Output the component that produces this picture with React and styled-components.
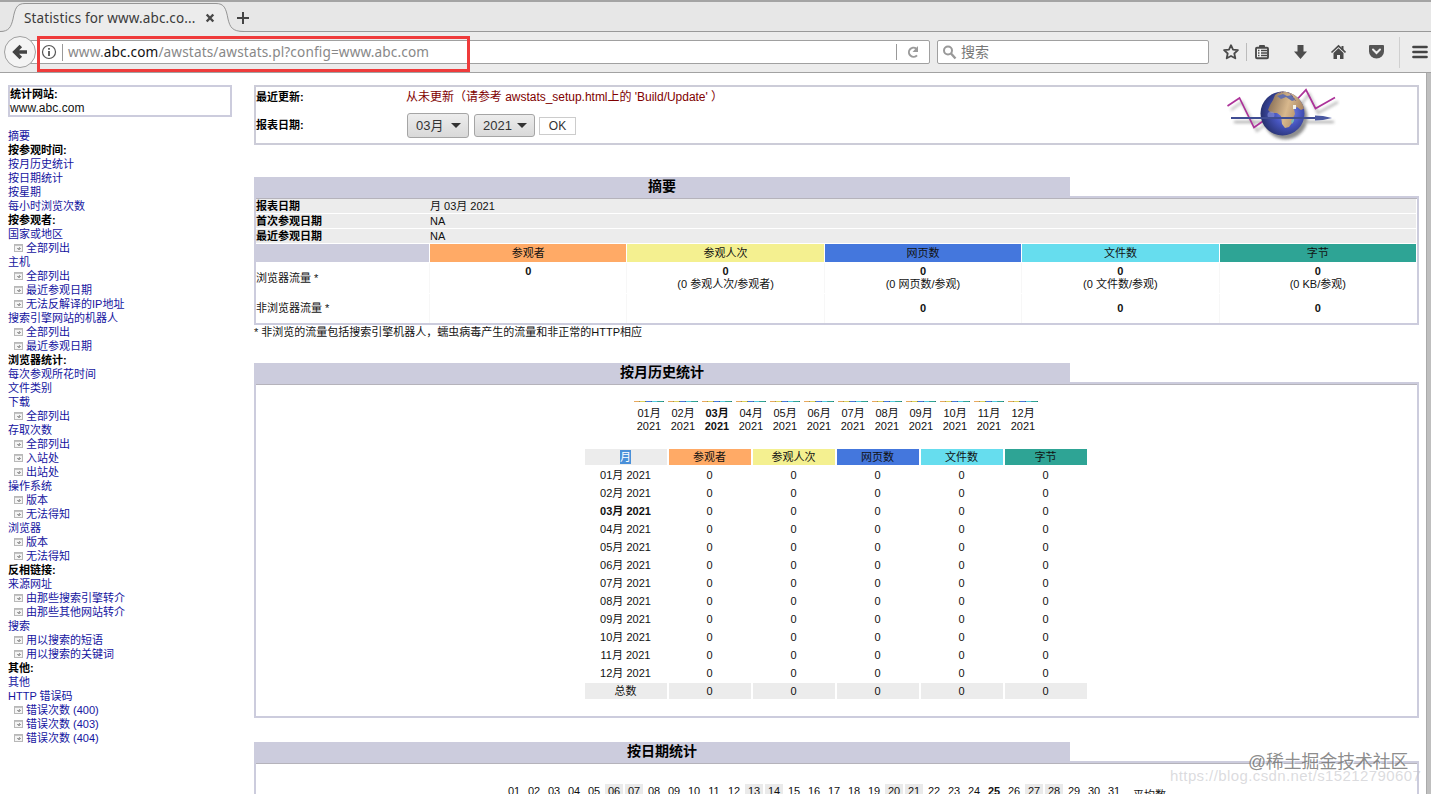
import React from 'react';
import styled, { createGlobalStyle } from 'styled-components';

const metrics = [
    { name: '参观者', color: '#ffaa66', avg: '' },
    { name: '参观人次', color: '#f4f090', avg: '(0 参观人次/参观者)' },
    { name: '网页数', color: '#4477dd', avg: '(0 网页数/参观)' },
    { name: '文件数', color: '#66ddee', avg: '(0 文件数/参观)' },
    { name: '字节', color: '#2ea495', avg: '(0 KB/参观)' },
];
const months = ['01', '02', '03', '04', '05', '06', '07', '08', '09', '10', '11', '12'];
const days = Array.from({ length: 31 }, (_, i) => String(i + 1).padStart(2, '0'));
const weekend = ['06', '07', '13', '14', '20', '21', '27', '28'];

// t: title, l: link, s: sub link
const menu = [
    ['l', '摘要'],
    ['t', '按参观时间:'],
    ['l', '按月历史统计'],
    ['l', '按日期统计'],
    ['l', '按星期'],
    ['l', '每小时浏览次数'],
    ['t', '按参观者:'],
    ['l', '国家或地区'],
    ['s', '全部列出'],
    ['l', '主机'],
    ['s', '全部列出'],
    ['s', '最近参观日期'],
    ['s', '无法反解译的IP地址'],
    ['l', '搜索引擎网站的机器人'],
    ['s', '全部列出'],
    ['s', '最近参观日期'],
    ['t', '浏览器统计:'],
    ['l', '每次参观所花时间'],
    ['l', '文件类别'],
    ['l', '下载'],
    ['s', '全部列出'],
    ['l', '存取次数'],
    ['s', '全部列出'],
    ['s', '入站处'],
    ['s', '出站处'],
    ['l', '操作系统'],
    ['s', '版本'],
    ['s', '无法得知'],
    ['l', '浏览器'],
    ['s', '版本'],
    ['s', '无法得知'],
    ['t', '反相链接:'],
    ['l', '来源网址'],
    ['s', '由那些搜索引擎转介'],
    ['s', '由那些其他网站转介'],
    ['l', '搜索'],
    ['s', '用以搜索的短语'],
    ['s', '用以搜索的关键词'],
    ['t', '其他:'],
    ['l', '其他'],
    ['l', 'HTTP 错误码'],
    ['s', '错误次数 (400)'],
    ['s', '错误次数 (403)'],
    ['s', '错误次数 (404)'],
];

const PageIcon = () => (
    <svg width="9" height="8" viewBox="0 0 9 8" shapeRendering="crispEdges">
        <rect x="0.5" y="0.5" width="8" height="7" fill="#f4f4f4" stroke="#b8b8b8" />
        <path d="M1 1.5h7" stroke="#c4c4c4" />
        <path d="M3 4.5h4M4 5.5h2M5 3.5h1" stroke="#a0a0a0" />
    </svg>
);

const Logo = () => (
    <svg width="114" height="54" viewBox="0 0 114 54">
        <defs>
            <radialGradient id="sea" cx="0.62" cy="0.48" r="0.62">
                <stop offset="0" stopColor="#7d8df0" />
                <stop offset="0.5" stopColor="#4654bd" />
                <stop offset="1" stopColor="#26306d" />
            </radialGradient>
            <linearGradient id="land" x1="0" y1="0" x2="1" y2="0.3">
                <stop offset="0" stopColor="#77604b" />
                <stop offset="0.6" stopColor="#d8b88d" />
                <stop offset="1" stopColor="#aa8764" />
            </linearGradient>
            <filter id="soft" x="-20%" y="-20%" width="150%" height="150%">
                <feGaussianBlur stdDeviation="1.8" />
            </filter>
            <clipPath id="ball"><circle cx="56.500" cy="25.500" r="22" /></clipPath>
        </defs>
        <g filter="url(#soft)" opacity="0.55" transform="translate(3 4)">
            <path d="M2 18L13 10L28 39L37 32M72 13L80 2L89 21L109 10" fill="none" stroke="#777" strokeWidth="2" />
            <circle cx="56.500" cy="25.500" r="22" fill="#333" />
            <path d="M5 30h100" stroke="#555" strokeWidth="2" />
        </g>
        <path d="M1.500 18L13.500 10L28 39.500L40 31M70 12.500L80 1.800L89.500 20.500L109 9.500" fill="none" stroke="#ac3299" strokeWidth="1.700" />
        <circle cx="56.500" cy="25.500" r="22" fill="url(#sea)" />
        <g clipPath="url(#ball)">
            <path d="M44 17l3-5 2-5 6-4 9-1 8 4 6 7 1 7-4 2-4-3-3 2 1 5-2 4 -1 5-3 4-4 1-3-4-1-8-4-3-6 0-3-3z" fill="url(#land)" />
            <path d="M51 8l6-2 4 2 5-1 3 5-3 1-6-4-5 2z" fill="#6470ac" />
            <path d="M53 5l7-2 3 2M62 3l8 10" fill="none" stroke="#695986" strokeDasharray="2 1" />
            <path d="M67 17h3v4h-3z" fill="#f2f3ee" />
            <path d="M65 33l3-3v3l-2 3z" fill="#77b8b4" />
            <circle cx="45" cy="27" r="3.500" fill="#8993db" opacity="0.6" />
        </g>
        <path d="M5 30h87" stroke="#3f4d93" strokeWidth="2" />
        <path d="M89 27.500l8 .5 9 2-9 2-8 .5z" fill="#4957a0" />
    </svg>
);

const Section = ({ title, children, height }) => (
    <div>
        <SectionTitle>{title}</SectionTitle>
        <SectionBox $height={height}>{children}</SectionBox>
    </div>
);

export default function App() {
    return (
        <Window>
            <GlobalStyle />
            <TabBar>
                <TabShape width="244" height="31" viewBox="0 0 244 31">
                    <path d="M0 30.500C9 30.500 11 26 13 18C15 7 17 2.500 25 2.500H216C224 2.500 226 7 228 18C230 26 232 30.500 244 30.500V31H0Z" fill="#ececec" />
                    <path d="M0 30.500C9 30.500 11 26 13 18C15 7 17 2.500 25 2.500H216C224 2.500 226 7 228 18C230 26 232 30.500 244 30.500" fill="none" stroke="#959595" />
                </TabShape>
                <TabTitle>Statistics for www.abc.co...</TabTitle>
                <TabIcon width="10" height="10" viewBox="0 0 10 10">
                    <path d="M1.700 1.500l6.600 7M8.300 1.500l-6.600 7" stroke="#484848" strokeWidth="2.400" />
                </TabIcon>
                <PlusIcon width="14" height="14" viewBox="0 0 14 14">
                    <path d="M7 1v12M1 7h12" stroke="#444" strokeWidth="2" />
                </PlusIcon>
            </TabBar>
            <Toolbar>
                <BackButton>
                    <svg width="16" height="16" viewBox="0 0 16 16">
                        <path d="M8.800 2L2.800 8l6 6M3.500 8H15" fill="none" stroke="#444" strokeWidth="3.600" />
                    </svg>
                </BackButton>
                <UrlBox>
                    <svg width="16" height="16" viewBox="0 0 16 16">
                        <circle cx="8" cy="8" r="6.500" fill="none" stroke="#555" strokeWidth="1.200" />
                        <path d="M8 7v5M8 4v1.800" stroke="#555" strokeWidth="1.800" />
                    </svg>
                    <Divider $h={17} $c="#999" />
                    <Url>www.<b>abc.com</b>/awstats/awstats.pl?config=www.abc.com</Url>
                    <Divider $h={16} $c="#999" />
                    <Reload width="14" height="14" viewBox="0 0 14 14">
                        <path d="M11 10.300A4.600 4.600 0 1 1 10.200 3.500" fill="none" stroke="#9b9b9b" strokeWidth="2" />
                        <path d="M12 1v6H6.500z" fill="#9b9b9b" />
                    </Reload>
                </UrlBox>
                <SearchBox>
                    <svg width="15" height="15" viewBox="0 0 15 15">
                        <circle cx="6" cy="5.500" r="4" fill="none" stroke="#999" strokeWidth="2" />
                        <path d="M9 8.500l4.500 5" stroke="#999" strokeWidth="2.400" />
                    </svg>
                    搜索
                </SearchBox>
                <Tools>
                    <svg width="16" height="16" viewBox="0 0 16 16">
                        <path d="M8 1.200l2 4.400 4.900.600-3.600 3.300 1 4.800L8 12l-4.300 2.300 1-4.800L1.100 6.200 6 5.600z" fill="none" stroke="#4a4a4a" strokeWidth="1.800" strokeLinejoin="round" />
                    </svg>
                    <Divider $h={18} $c="#bbb" />
                    <svg width="16" height="16" viewBox="0 0 16 16">
                        <rect x="2" y="3.700" width="12" height="10.500" rx="1" fill="#f6f6f6" stroke="#4a4a4a" strokeWidth="1.900" />
                        <path d="M5 3.500V2a1 1 0 0 1 1-1h4a1 1 0 0 1 1 1v1.500z" fill="#4a4a4a" />
                        <path d="M4 6.500h1.500M7 6.500h6M4 9h1.500M7 9h6M4 11.500h1.500M7 11.500h6" stroke="#4a4a4a" strokeWidth="1.300" />
                    </svg>
                    <svg width="16" height="16" viewBox="0 0 16 16">
                        <path d="M5.500 1h6v6.500H15L8.500 15 2 7.500h3.500z" fill="#4d4d4d" />
                    </svg>
                    <svg width="16" height="16" viewBox="0 0 16 16">
                        <path d="M1.500 8.500l7-6.500 7 6.500" fill="none" stroke="#4a4a4a" strokeWidth="1.700" />
                        <path d="M11.500 2h2v4h-2z" fill="#4a4a4a" />
                        <path d="M3.500 9l5-4.800 5 4.800v6H10v-4H7v4H3.500z" fill="#4a4a4a" />
                    </svg>
                    <svg width="17" height="16" viewBox="0 0 16 16">
                        <path d="M1.500 1h13a1 1 0 0 1 1 1v5.500a7.500 7 0 0 1-15 0V2a1 1 0 0 1 1-1z" fill="#555" />
                        <path d="M4.500 5.500L8 9l3.500-3.500" fill="none" stroke="#eee" strokeWidth="2" strokeLinecap="round" />
                    </svg>
                </Tools>
                <Divider $h={31} $c="#d0d0d0" />
                <MenuIcon width="16" height="14" viewBox="0 0 16 14">
                    <path d="M1.500 2h13M1.500 7h13M1.500 12h13" stroke="#444" strokeWidth="2.700" strokeLinecap="round" />
                </MenuIcon>
                <Highlight />
            </Toolbar>

            <Page>
                <Sidebar>
                    <SiteBox>
                        <b>统计网站:</b>
                        <SiteName>www.abc.com</SiteName>
                    </SiteBox>
                    {menu.map(([kind, text], i) => (
                        <MenuRow key={i} $kind={kind}>
                            {kind === 's' && <PageIcon />}
                            <span>{text}</span>
                        </MenuRow>
                    ))}
                </Sidebar>

                <Main>
                    <HeaderBox>
                        <HeaderRow $h={20}>
                            <b>最近更新:</b>
                            <Warning>从未更新（请参考 awstats_setup.html上的 'Build/Update' ）</Warning>
                        </HeaderRow>
                        <HeaderRow $h={36}>
                            <b>报表日期:</b>
                            <Select $w={62} $h={25}>03月<Arrow /></Select>
                            <Select $w={61} $h={23}>2021<Arrow /></Select>
                            <Ok>OK</Ok>
                        </HeaderRow>
                        <LogoSpot><Logo /></LogoSpot>
                    </HeaderBox>

                    <Section title="摘要" height={129}>
                        <InfoRow><b>报表日期</b><span>月 03月 2021</span></InfoRow>
                        <InfoRow><b>首次参观日期</b><span>NA</span></InfoRow>
                        <InfoRow><b>最近参观日期</b><span>NA</span></InfoRow>
                        <SummaryRow $h={18}>
                            <HeadCell $color="#ccccdd" />
                            {metrics.map(m => <HeadCell key={m.name} $color={m.color}>{m.name}</HeadCell>)}
                        </SummaryRow>
                        <SummaryRow $h={30}>
                            <LabelCell>浏览器流量 *</LabelCell>
                            {metrics.map(m => (
                                <ValueCell key={m.name}>
                                    <b>0</b>
                                    {m.avg || '\u00a0'}
                                </ValueCell>
                            ))}
                        </SummaryRow>
                        <SummaryRow $h={29}>
                            <LabelCell>非浏览器流量 *</LabelCell>
                            {metrics.map((m, i) => <ValueCell key={m.name}>{i > 1 && <b>0</b>}</ValueCell>)}
                        </SummaryRow>
                    </Section>
                    <Note>* 非浏览的流量包括搜索引擎机器人，蠕虫病毒产生的流量和非正常的HTTP相应</Note>

                    <Section title="按月历史统计" height={336}>
                        <MonthBars>
                            {months.map(m => (
                                <MonthBar key={m} $bold={m === '03'}>
                                    <Bar />
                                    <span>{m}月</span>
                                    <span>2021</span>
                                </MonthBar>
                            ))}
                        </MonthBars>
                        <MonthTable>
                            <Cell $bg="#ececec"><Selected>月</Selected></Cell>
                            {metrics.map(m => <Cell key={m.name} $bg={m.color}>{m.name}</Cell>)}
                            {months.map(m => (
                                <React.Fragment key={m}>
                                    <Cell $bold={m === '03'}>{m}月 2021</Cell>
                                    {metrics.map(x => <Cell key={x.name}>0</Cell>)}
                                </React.Fragment>
                            ))}
                            <Cell $bg="#ececec">总数</Cell>
                            {metrics.map(x => <Cell key={x.name} $bg="#ececec">0</Cell>)}
                        </MonthTable>
                    </Section>
                    <Gap />
                    <Section title="按日期统计" height={120}>
                        <Days>
                            {days.map(d => (
                                <Day key={d} $grey={weekend.includes(d)} $bold={d === '25'}>{d}</Day>
                            ))}
                            <Average>平均数</Average>
                        </Days>
                    </Section>
                </Main>
                <Scrollbar />
            </Page>
            <BlogMark>https://blog.csdn.net/s15212790607</BlogMark>
            <SiteMark>@稀土掘金技术社区</SiteMark>
        </Window>
    );
}

// STYLED COMPONENTS //

const GlobalStyle = createGlobalStyle`
    * {
        box-sizing: border-box;
    }
    body {
        margin: 0;
        overflow: hidden;
    }
    svg {
        display: block;
        flex-shrink: 0;
    }
`;
const Window = styled.div`
    position: relative;
    display: flex;
    flex-direction: column;
    width: 1431px;
    height: 794px;
    overflow: hidden;
    background: #fff;
    color: #111;
    font: 11px/13px 'Liberation Sans', 'Noto Sans CJK SC', sans-serif;
    white-space: nowrap;
`;
const TabBar = styled.div`
    position: relative;
    display: flex;
    align-items: center;
    height: 32px;
    flex-shrink: 0;
    padding-left: 24px;
    background: #e7e7e7;
    border-top: 2px solid #a4a4a4;
    border-bottom: 1px solid #999;
`;
const TabShape = styled.svg`
    position: absolute;
    left: 0;
    top: -1px;
`;
const TabTitle = styled.div`
    position: relative;
    width: 181px;
    font: 13.5px/20px 'Noto Sans', sans-serif;
    letter-spacing: 0.13px;
    color: #3b3b3b;
    padding-top: 3px;
`;
const TabIcon = styled.svg`
    position: relative;
    margin-top: 3px;
`;
const PlusIcon = styled.svg`
    margin: 3px 0 0 21px;
`;
const Toolbar = styled.div`
    position: relative;
    display: flex;
    align-items: center;
    height: 41px;
    flex-shrink: 0;
    padding-left: 4px;
    background: #ececec;
    border-bottom: 1px solid #a2a2a2;
`;
const BackButton = styled.div`
    position: relative;
    z-index: 1;
    display: flex;
    align-items: center;
    justify-content: center;
    width: 32px;
    height: 32px;
    border: 1px solid #a0a0a0;
    border-radius: 50%;
    background: #f4f4f4;
`;
const UrlBox = styled.div`
    display: flex;
    align-items: center;
    width: 901px;
    height: 24px;
    margin-left: -7px;
    padding-left: 11px;
    background: #fff;
    border: 1px solid #a0a0a0;
    border-radius: 2px;
`;
const Divider = styled.div`
    width: 1px;
    height: ${p => p.$h}px;
    margin-left: 5px;
    background: ${p => p.$c};
`;
const Url = styled.div`
    flex: 1;
    padding-left: 5px;
    font: 13.6px/20px 'Noto Sans', sans-serif;
    letter-spacing: 0.145px;
    color: #888;
    b {
        font-weight: 400;
        color: #111;
    }
`;
const Reload = styled.svg`
    margin: 0 9px 0 9px;
`;
const SearchBox = styled.div`
    display: flex;
    align-items: center;
    gap: 4px;
    width: 272px;
    height: 24px;
    margin-left: 7px;
    padding-left: 4px;
    background: #fff;
    border: 1px solid #a0a0a0;
    border-radius: 2px;
    color: #777;
    font-size: 14px;
`;
const Tools = styled.div`
    display: flex;
    align-items: center;
    gap: 22px;
    margin: 0 9px 0 14px;
    ${Divider} {
        margin: 0 -15px 0 -15px;
    }
`;
const MenuIcon = styled.svg`
    margin-left: 12px;
`;
const Highlight = styled.div`
    position: absolute;
    z-index: 2;
    left: 37px;
    top: 4px;
    width: 433px;
    height: 36px;
    border: 3px solid #ef3b3b;
`;
const Page = styled.div`
    display: flex;
    flex: 1;
    min-height: 0;
    padding-left: 8px;
`;
const Sidebar = styled.div`
    width: 224px;
    padding-top: 12px;
    flex-shrink: 0;
`;
const SiteBox = styled.div`
    height: 32px;
    margin-bottom: 12px;
    border: 2px solid #ccccdd;
    line-height: 14px;
    b {
        display: block;
        line-height: 14px;
        color: #000;
    }
`;
const SiteName = styled.div`
    font-size: 12px;
    line-height: 14px;
    letter-spacing: 0.05px;
`;
const MenuRow = styled.div`
    display: flex;
    align-items: center;
    gap: 3px;
    height: 14px;
    line-height: 14px;
    padding-left: ${p => (p.$kind === 's' ? 6 : 0)}px;
    font-weight: ${p => (p.$kind === 't' ? 700 : 400)};
    color: ${p => (p.$kind === 't' ? '#000' : '#1414a0')};
`;
const Main = styled.div`
    width: 1165px;
    margin-left: 22px;
    padding-top: 12px;
    flex-shrink: 0;
`;
const HeaderBox = styled.div`
    position: relative;
    height: 60px;
    margin-bottom: 32px;
    border: 2px solid #ccccd8;
`;
const HeaderRow = styled.div`
    display: flex;
    align-items: center;
    height: ${p => p.$h}px;
    b {
        width: 151px;
        color: #000;
    }
`;
const Warning = styled.span`
    font-size: 12px;
    letter-spacing: -0.02px;
    color: #800000;
    margin-left: -1px;
`;
const Select = styled.div`
    display: flex;
    align-items: center;
    justify-content: space-between;
    width: ${p => p.$w}px;
    height: ${p => p.$h}px;
    margin-right: 5px;
    padding: 0 7px 0 8px;
    border: 1px solid #a5a5a5;
    border-radius: 3px;
    background: linear-gradient(#ededed, #d9d9d9);
    font-size: 13px;
    color: #333;
`;
const Arrow = styled.i`
    border: 5px solid transparent;
    border-top-color: #333;
    border-bottom: 0;
`;
const Ok = styled.div`
    width: 37px;
    height: 18px;
    border: 1px solid #ccc;
    background: #fff;
    font-size: 12px;
    line-height: 16px;
    text-align: center;
    color: #333;
    margin: 1px 0 0 -1px;
`;
const LogoSpot = styled.div`
    position: absolute;
    left: 970px;
    top: 1px;
`;
const SectionTitle = styled.div`
    width: 816px;
    height: 19px;
    background: #ccccdd;
    color: #000;
    font-size: 14px;
    font-weight: 700;
    line-height: 19px;
    text-align: center;
`;
const SectionBox = styled.div`
    height: ${p => p.$height}px;
    border: 2px solid #ccccdd;
    box-shadow: inset 0 1px #b5b3bb;
    padding-top: 1px;
`;
const InfoRow = styled.div`
    display: grid;
    grid-template-columns: 174px 1fr;
    align-items: center;
    height: 14px;
    margin: 0 1px 1px 0;
    background: #ececec;
    b {
        color: #000;
    }
`;
const SummaryRow = styled.div`
    display: grid;
    grid-template-columns: 173px repeat(5, 1fr);
    column-gap: 1px;
    height: ${p => p.$h}px;
    margin: 0 1px 1px 0;
`;
const HeadCell = styled.div`
    background: ${p => p.$color};
    line-height: 18px;
    text-align: center;
`;
const LabelCell = styled.div`
    display: flex;
    align-items: center;
`;
const ValueCell = styled.div`
    display: flex;
    flex-direction: column;
    align-items: center;
    justify-content: center;
    box-shadow: -1px 0 #f7f7f7;
    b {
        line-height: 13px;
    }
`;
const Note = styled.div`
    height: 38px;
    line-height: 14px;
`;
const MonthBars = styled.div`
    display: flex;
    justify-content: center;
    gap: 4px;
    padding: 16px 1px 0 0;
`;
const MonthBar = styled.div`
    display: flex;
    flex-direction: column;
    align-items: center;
    width: 30px;
    font-weight: ${p => (p.$bold ? 700 : 400)};
`;
const Bar = styled.div`
    width: 30px;
    height: 1px;
    margin-bottom: 5px;
    background: linear-gradient(90deg, #e8a95e 0 5px, #a5944a 5px 6px, #e0d45c 6px 11px, #777a42 11px 12px, #4477dd 12px 17px, #346595 17px 18px, #56d0e2 18px 23px, #479aa2 23px 24px, #2ea495 24px 29px, #277a71 29px);
`;
const MonthTable = styled.div`
    display: grid;
    grid-template-columns: repeat(6, 82px);
    justify-content: center;
    gap: 2px;
    margin-top: 16px;
    padding-right: 2px;
`;
const Cell = styled.div`
    height: 16px;
    line-height: 16px;
    text-align: center;
    background: ${p => p.$bg || 'transparent'};
    font-weight: ${p => (p.$bold ? 700 : 400)};
`;
const Selected = styled.span`
    display: inline-block;
    height: 14px;
    margin-top: 1px;
    line-height: 14px;
    vertical-align: top;
    background: #4a90d9;
    color: #fff;
`;
const Gap = styled.div`
    height: 24px;
`;
const Days = styled.div`
    display: flex;
    gap: 2px;
    padding: 20px 0 0 249px;
`;
const Day = styled.div`
    width: 18px;
    height: 28px;
    line-height: 14px;
    text-align: center;
    background: ${p => (p.$grey ? '#eaeaea' : 'transparent')};
    font-weight: ${p => (p.$bold ? 700 : 400)};
`;
const Average = styled.div`
    padding: 5px 0 0 8px;
`;
const Scrollbar = styled.div`
    width: 5px;
    margin-left: auto;
    background: #bfbfbf;
    border-left: 1px solid #aaa;
`;
const BlogMark = styled.div`
    position: absolute;
    left: 1170px;
    top: 766px;
    font: 15px/20px 'Liberation Sans', sans-serif;
    letter-spacing: 0.4px;
    color: rgba(195, 195, 200, 0.6);
`;
const SiteMark = styled.div`
    position: absolute;
    left: 1248px;
    top: 750px;
    font: 17.8px/24px 'Liberation Sans', 'Noto Sans CJK SC', sans-serif;
    color: rgba(110, 110, 110, 0.8);
    text-shadow: 1px 1px 1px #fff;
`;
